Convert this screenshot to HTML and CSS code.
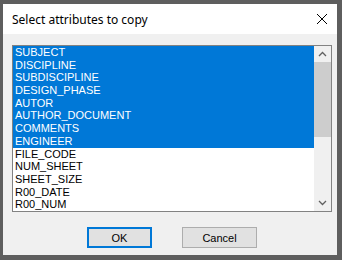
FILE: index.html
```html
<!DOCTYPE html>
<html>
<head>
<meta charset="utf-8">
<link rel="stylesheet" href="styles.css">
</head>
<body>
<div class="window">
  <div class="titlebar">
    <span class="title">Select attributes to copy</span>
    <svg class="close" width="12" height="12" viewBox="0 0 12 12"><path d="M1 1 L11 11 M11 1 L1 11" stroke="#000" stroke-width="1" fill="none"/></svg>
  </div>
  <div class="content">
    <div class="listbox">
      <div class="items">
        <div class="item sel">SUBJECT</div>
        <div class="item sel">DISCIPLINE</div>
        <div class="item sel">SUBDISCIPLINE</div>
        <div class="item sel">DESIGN_PHASE</div>
        <div class="item sel">AUTOR</div>
        <div class="item sel">AUTHOR_DOCUMENT</div>
        <div class="item sel">COMMENTS</div>
        <div class="item sel">ENGINEER</div>
        <div class="item">FILE_CODE</div>
        <div class="item">NUM_SHEET</div>
        <div class="item">SHEET_SIZE</div>
        <div class="item">R00_DATE</div>
        <div class="item">R00_NUM</div>
      </div>
      <div class="scrollbar">
        <div class="arrow"><svg width="9" height="6" viewBox="0 0 9 6"><path d="M1 5 L4.5 1.5 L8 5" stroke="#606060" stroke-width="1.3" fill="none"/></svg></div>
        <div class="thumb"></div>
        <div class="track"></div>
        <div class="arrow"><svg width="9" height="6" viewBox="0 0 9 6"><path d="M1 1 L4.5 4.5 L8 1" stroke="#606060" stroke-width="1.3" fill="none"/></svg></div>
      </div>
    </div>
    <div class="buttons">
      <button class="btn default">OK</button>
      <button class="btn cancel">Cancel</button>
    </div>
  </div>
</div>
</body>
</html>
```

FILE: styles.css
```css
html, body {
  margin: 0;
  padding: 0;
}
body {
  background: #5e5e5e;
  width: 342px;
  height: 260px;
  padding: 4px 0 0 3px;
  box-sizing: border-box;
  overflow: hidden;
}
.window {
  width: 334px;
  height: 251px;
  background: #f0f0f0;
  display: flex;
  flex-direction: column;
  box-sizing: border-box;
}
.titlebar {
  height: 30px;
  background: #ffffff;
  display: flex;
  align-items: center;
  justify-content: space-between;
  padding: 0 9px 0 9px;
  flex: none;
}
.title {
  font-family: "Noto Sans", "Open Sans", sans-serif;
  font-size: 12px;
  color: #000;
  position: relative;
  top: 0px;
}
.close {
  display: block;
}
.content {
  padding: 11px 5px 0 9px;
  flex: 1;
  display: flex;
  flex-direction: column;
}
.listbox {
  width: 320px;
  height: 167px;
  box-sizing: border-box;
  border: 1px solid #828282;
  background: #ffffff;
  display: flex;
}
.items {
  flex: 1;
  display: flex;
  flex-direction: column;
  overflow: hidden;
}
.item {
  height: 12.7px;
  line-height: 13px;
  padding-left: 2px;
  font-family: "Liberation Sans", Arial, sans-serif;
  font-size: 11px;
  color: #000;
  white-space: nowrap;
  flex: none;
}
.item.sel {
  background: #0078d7;
  color: #ffffff;
}
.scrollbar {
  width: 17px;
  background: #f0f0f0;
  display: flex;
  flex-direction: column;
  flex: none;
}
.arrow {
  height: 16px;
  display: flex;
  align-items: center;
  justify-content: center;
  flex: none;
}
.thumb {
  height: 75px;
  background: #cdcdcd;
  flex: none;
}
.track {
  flex: 1;
}
.buttons {
  display: flex;
  padding-left: 75px;
  margin-top: 15px;
  gap: 30px;
}
.btn {
  height: 21px;
  box-sizing: border-box;
  background: #e1e1e1;
  border: 1px solid #adadad;
  font-family: "Liberation Sans", Arial, sans-serif;
  font-size: 11px;
  color: #000;
  padding: 0;
  margin: 0;
}
.btn.default {
  width: 65px;
  border: 2px solid #0078d7;
}
.btn.cancel {
  width: 75px;
}
```
